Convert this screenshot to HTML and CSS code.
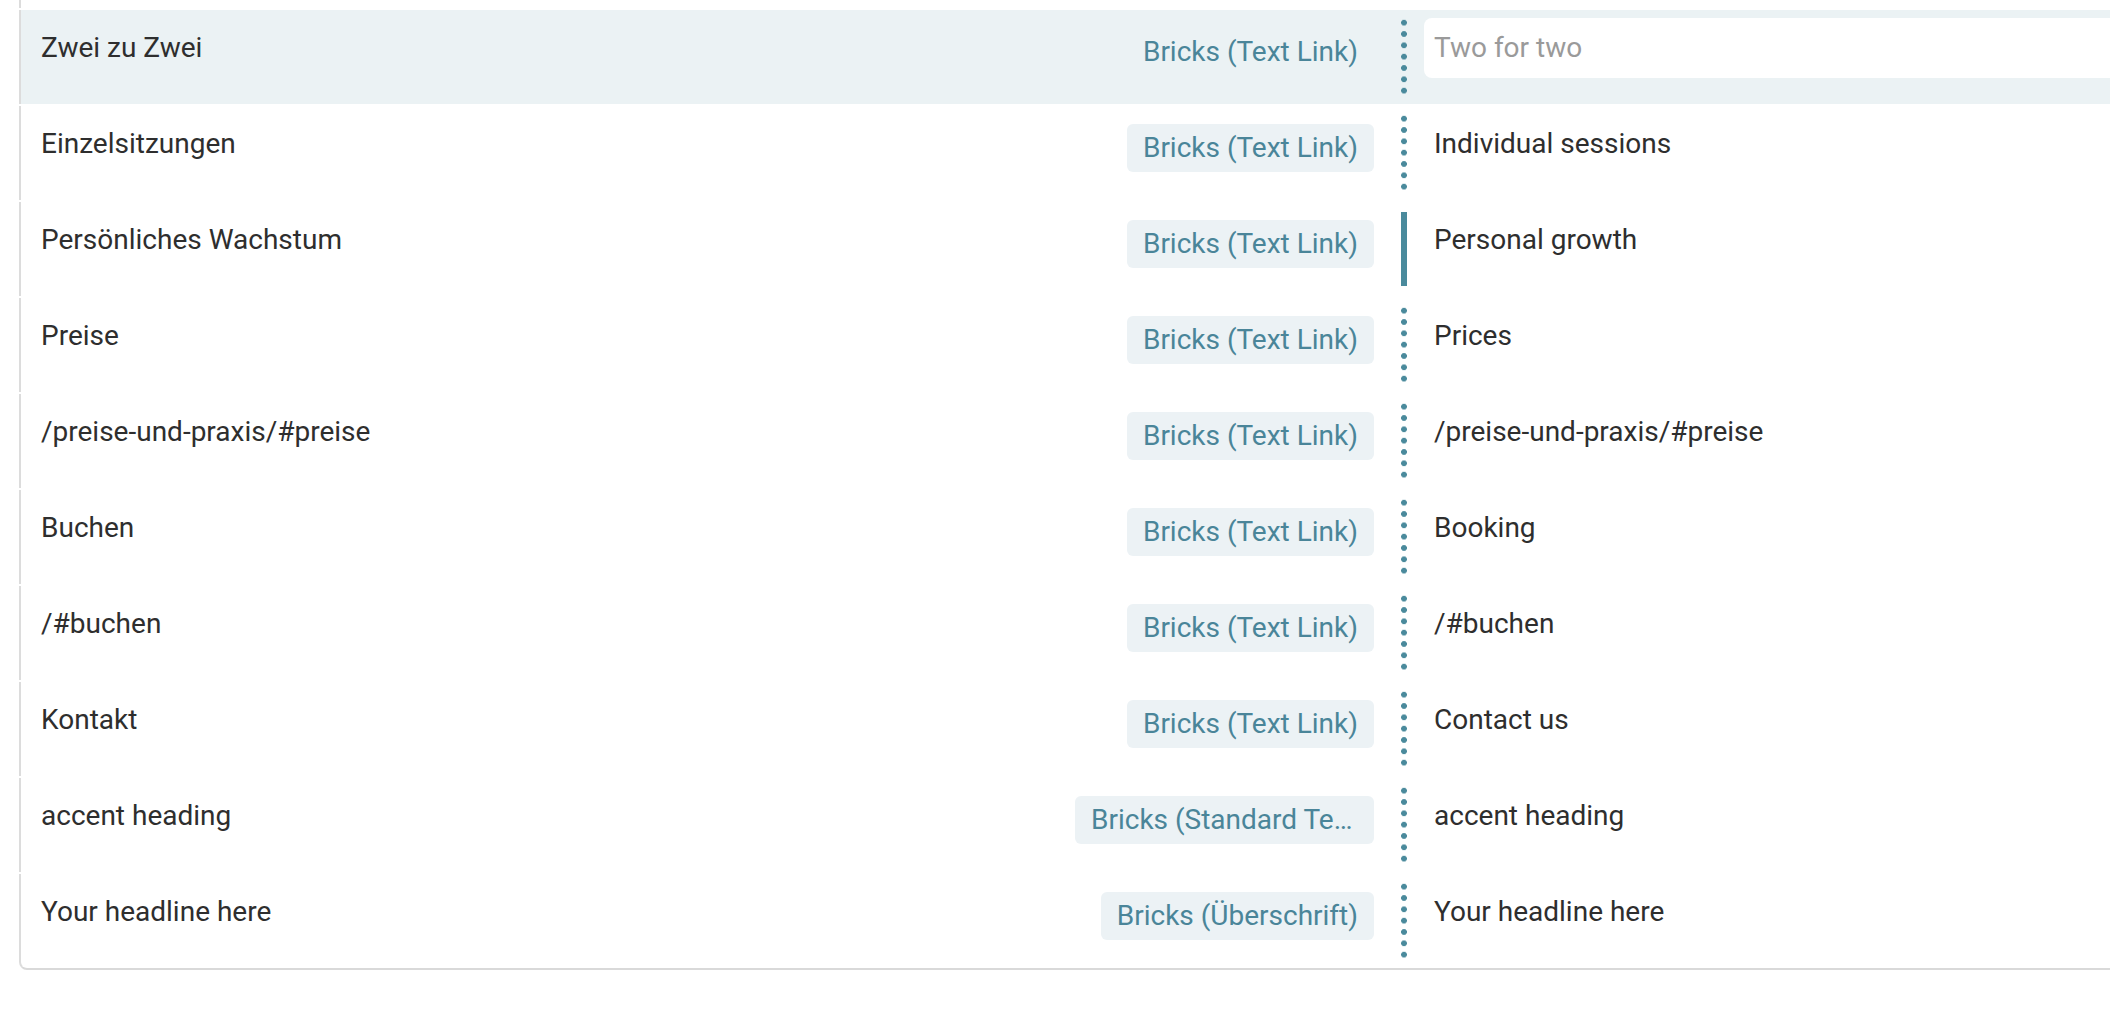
FILE: index.html
```html
<!DOCTYPE html>
<html lang="de">
<head>
    <meta charset="UTF-8">
    <meta name="viewport" content="width=device-width, initial-scale=1.0">
    <title>String Translation</title>
    <link rel="stylesheet" href="styles.css">
</head>
<body>
    <div class="page">
    <div class="strings">
        <div class="row row-stub"></div>

        <div class="row active">
            <div class="source">
                <span class="source-text">Zwei zu Zwei</span>
                <span class="badge">Bricks (Text Link)</span>
            </div>
            <div class="sep"></div>
            <div class="target">
                <input class="target-input" type="text" placeholder="Two for two">
            </div>
        </div>

        <div class="row">
            <div class="source">
                <span class="source-text">Einzelsitzungen</span>
                <span class="badge">Bricks (Text Link)</span>
            </div>
            <div class="sep"></div>
            <div class="target"><span class="target-text">Individual sessions</span></div>
        </div>

        <div class="row">
            <div class="source">
                <span class="source-text">Persönliches Wachstum</span>
                <span class="badge">Bricks (Text Link)</span>
            </div>
            <div class="sep sep-solid"></div>
            <div class="target"><span class="target-text">Personal growth</span></div>
        </div>

        <div class="row">
            <div class="source">
                <span class="source-text">Preise</span>
                <span class="badge">Bricks (Text Link)</span>
            </div>
            <div class="sep"></div>
            <div class="target"><span class="target-text">Prices</span></div>
        </div>

        <div class="row">
            <div class="source">
                <span class="source-text">/preise-und-praxis/#preise</span>
                <span class="badge">Bricks (Text Link)</span>
            </div>
            <div class="sep"></div>
            <div class="target"><span class="target-text">/preise-und-praxis/#preise</span></div>
        </div>

        <div class="row">
            <div class="source">
                <span class="source-text">Buchen</span>
                <span class="badge">Bricks (Text Link)</span>
            </div>
            <div class="sep"></div>
            <div class="target"><span class="target-text">Booking</span></div>
        </div>

        <div class="row">
            <div class="source">
                <span class="source-text">/#buchen</span>
                <span class="badge">Bricks (Text Link)</span>
            </div>
            <div class="sep"></div>
            <div class="target"><span class="target-text">/#buchen</span></div>
        </div>

        <div class="row">
            <div class="source">
                <span class="source-text">Kontakt</span>
                <span class="badge">Bricks (Text Link)</span>
            </div>
            <div class="sep"></div>
            <div class="target"><span class="target-text">Contact us</span></div>
        </div>

        <div class="row">
            <div class="source">
                <span class="source-text">accent heading</span>
                <span class="badge badge-cut">Bricks (Standard Text)</span>
            </div>
            <div class="sep"></div>
            <div class="target"><span class="target-text">accent heading</span></div>
        </div>

        <div class="row last">
            <div class="source">
                <span class="source-text">Your headline here</span>
                <span class="badge">Bricks (Überschrift)</span>
            </div>
            <div class="sep"></div>
            <div class="target"><span class="target-text">Your headline here</span></div>
        </div>
    </div>
    </div>
</body>
</html>
```

FILE: styles.css
```css
html, body {
    overflow: hidden;
}

body {
    margin: 0;
    background-color: white;
    font-family: Roboto, "Noto Sans", Arial, sans-serif;
    font-size: 28px;
    line-height: 40px;
    color: #2e2e2e;
}

/* the list runs on past the right edge of the window */
.page {
    width: 100%;
    overflow: hidden;
}

.strings {
    width: 2300px;
    margin-left: 19px;
}

.row {
    display: grid;
    grid-template-columns: 1380px 6px 1fr;
    height: 94px;
    margin-bottom: 2px;
    border-left: 2px solid #dcdcdc;
    box-sizing: border-box;
}

.row-stub {
    height: 8px;
}

.row.active {
    background-color: #ebf2f4;
}

.row.last {
    height: 96px;
    margin-bottom: 0;
    border-bottom: 2px solid #d9d9d9;
    border-bottom-left-radius: 8px;
}

.source {
    display: flex;
    justify-content: space-between;
    align-items: flex-start;
    padding: 18px 27px 0 20px;
    min-width: 0;
}

.source-text {
    white-space: nowrap;
}

.badge {
    background-color: #ecf2f5;
    color: #4a8599;
    padding: 4px 16px;
    border-radius: 6px;
    white-space: nowrap;
}

.row.active .badge {
    background-color: transparent;
}

.badge-cut {
    max-width: 267px;
    overflow: hidden;
    text-overflow: ellipsis;
}

.sep {
    margin-top: 7px;
    height: 79px;
    background-image: radial-gradient(circle, #4a8a9c 2.6px, transparent 3.2px);
    background-size: 6px 11.33px;
}

.sep-solid {
    margin-top: 10px;
    height: 74px;
    background-image: none;
    background-color: #4a8a9c;
}

.target {
    padding: 18px 0 0 17px;
}

.row.active .target {
    padding-top: 8px;
}

.target-text {
    display: block;
    padding-left: 10px;
    white-space: nowrap;
}

.target-input {
    display: block;
    width: 100%;
    height: 60px;
    box-sizing: border-box;
    padding: 9px 10px 11px;
    border: none;
    border-radius: 8px;
    background-color: white;
    font-family: inherit;
    font-size: 28px;
    color: #2e2e2e;
    outline: none;
}

.target-input::placeholder {
    color: #9a9a9a;
}
```
